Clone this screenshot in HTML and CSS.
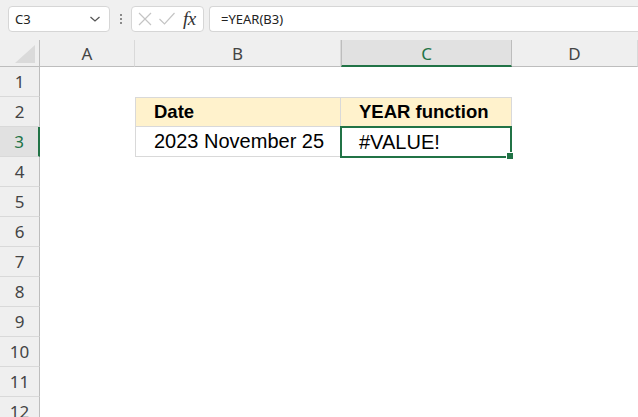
FILE: index.html
```html
<!DOCTYPE html>
<html>
<head>
<meta charset="utf-8">
<link rel="stylesheet" href="styles.css">
</head>
<body>
<div class="toolbar">
  <div class="namebox">
    <span class="ref">C3</span>
    <svg class="chev" width="12" height="8" viewBox="0 0 12 8"><path d="M1.5 2 L6 6 L10.5 2" fill="none" stroke="#555" stroke-width="1.3"/></svg>
  </div>
  <div class="dots"><i></i><i></i><i></i></div>
  <div class="fxbox">
    <svg width="16" height="16" viewBox="0 0 16 16"><path d="M2 2 L14 14 M14 2 L2 14" stroke="#c4c4c4" stroke-width="1.2" fill="none"/></svg>
    <svg width="18" height="16" viewBox="0 0 18 16"><path d="M1.5 8 L6.5 13 L16.5 2" stroke="#c4c4c4" stroke-width="1.2" fill="none"/></svg>
    <span class="fx">fx</span>
  </div>
  <div class="formula">=YEAR(B3)</div>
</div>
<div class="sheet">
  <div class="corner"><span class="tri"></span></div>
  <div class="ch">A</div>
  <div class="ch">B</div>
  <div class="ch sel">C</div>
  <div class="ch">D</div>

  <div class="rh">1</div><div class="c"></div><div class="c"></div><div class="c"></div><div class="c"></div>
  <div class="rh">2</div><div class="c"></div><div class="c th tl">Date</div><div class="c th tr">YEAR function</div><div class="c"></div>
  <div class="rh sel">3</div><div class="c"></div><div class="c td tl">2023 November 25</div><div class="c td tr active">#VALUE!<span class="handle"></span></div><div class="c"></div>
  <div class="rh">4</div><div class="c"></div><div class="c"></div><div class="c"></div><div class="c"></div>
  <div class="rh">5</div><div class="c"></div><div class="c"></div><div class="c"></div><div class="c"></div>
  <div class="rh">6</div><div class="c"></div><div class="c"></div><div class="c"></div><div class="c"></div>
  <div class="rh">7</div><div class="c"></div><div class="c"></div><div class="c"></div><div class="c"></div>
  <div class="rh">8</div><div class="c"></div><div class="c"></div><div class="c"></div><div class="c"></div>
  <div class="rh">9</div><div class="c"></div><div class="c"></div><div class="c"></div><div class="c"></div>
  <div class="rh">10</div><div class="c"></div><div class="c"></div><div class="c"></div><div class="c"></div>
  <div class="rh">11</div><div class="c"></div><div class="c"></div><div class="c"></div><div class="c"></div>
  <div class="rh">12</div><div class="c"></div><div class="c"></div><div class="c"></div><div class="c"></div>
</div>
</body>
</html>
```
FILE: styles.css
```css
html, body { margin: 0; padding: 0; }
body {
  width: 638px; height: 417px; overflow: hidden;
  background: #fff;
  font-family: "Segoe UI", "Noto Sans", "Open Sans", sans-serif;
}
.toolbar {
  height: 40px;
  background: #f0f0f0;
  display: flex;
  align-items: flex-start;
  padding-top: 6px;
  box-sizing: border-box;
}
.namebox {
  margin-left: 8px;
  width: 102px; height: 26px;
  box-sizing: border-box;
  background: #fff;
  border: 1px solid #d6d6d6;
  border-radius: 4px;
  display: flex; align-items: center; justify-content: space-between;
  padding: 0 8px 0 6px;
}
.ref { font-size: 13px; color: #222; font-family: "Noto Sans", sans-serif; }
.dots {
  width: 21px; height: 26px;
  display: flex; flex-direction: column; align-items: center; justify-content: center; gap: 2px;
}
.dots i { display: block; width: 2px; height: 2px; background: #8a8a8a; }
.fxbox {
  width: 73px; height: 26px; box-sizing: border-box;
  background: #fff;
  border: 1px solid #d6d6d6;
  border-radius: 4px;
  display: flex; align-items: center; gap: 5px;
  padding-left: 5px;
}
.fx { font-family: "Liberation Serif", serif; font-style: italic; font-size: 19px; color: #333; margin-left: 2px; letter-spacing: -0.5px; }
.formula {
  margin-left: 5px;
  flex: 1; height: 26px; box-sizing: border-box;
  background: #fff;
  border: 1px solid #d6d6d6;
  border-right: none;
  border-radius: 4px 0 0 4px;
  font-size: 13px; color: #222;
  font-family: "Noto Sans", sans-serif;
  padding-left: 11px;
  line-height: 24px;
}
.sheet {
  display: grid;
  grid-template-columns: 40px 95px 206px 171px 126px;
  grid-template-rows: 27px repeat(12, 30px);
}
.corner {
  background: #efefef;
  border-right: 1px solid #bdbdbd;
  border-bottom: 1px solid #bdbdbd;
  box-sizing: border-box;
  position: relative;
}
.tri {
  position: absolute; right: 4px; bottom: 3px;
  width: 0; height: 0;
  border-left: 20px solid transparent;
  border-bottom: 18px solid #dadada;
}
.ch {
  background: #efefef;
  border-right: 1px solid #d9d9d9;
  border-bottom: 1px solid #bdbdbd;
  box-sizing: border-box;
  text-align: center;
  font-family: "Noto Sans", sans-serif;
  font-size: 17px; color: #444;
  line-height: 28px;
}
.ch.sel {
  background: #e1e1e1;
  color: #217346;
  border-bottom: 2px solid #217346;
  border-left: 1px solid #bdbdbd;
  border-right: 1px solid #bdbdbd;
}
.rh {
  background: #efefef;
  border-right: 1px solid #bdbdbd;
  border-bottom: 1px solid #d9d9d9;
  box-sizing: border-box;
  text-align: center;
  font-family: "Noto Sans", sans-serif;
  font-size: 17px; color: #444;
  line-height: 30px;
}
.rh.sel {
  background: #e1e1e1;
  color: #217346;
  border-right: 2px solid #217346;
}
.c { box-sizing: border-box; }
.th, .td {
  font-family: "Liberation Sans", Arial, sans-serif;
  font-size: 20px;
  color: #000;
  padding-left: 18px;
  line-height: 30px;
  white-space: nowrap;
  border-bottom: 1px solid #d9d9d9;
  border-right: 1px solid #d9d9d9;
}
.th { background: #fff2cc; font-weight: bold; font-size: 18.5px; border-top: 1px solid #d9d9d9; line-height: 28px; }
.tl { border-left: 1px solid #d9d9d9; }
.td { line-height: 29px; }
.active {
  position: relative;
  border: 2px solid #217346;
  margin: -1px 0 -1px -1px;
  padding-left: 17px;
  line-height: 28px;
}
.handle {
  position: absolute; right: -4px; bottom: -4px;
  width: 6px; height: 6px;
  background: #217346;
  border: 1px solid #fff;
}
```
